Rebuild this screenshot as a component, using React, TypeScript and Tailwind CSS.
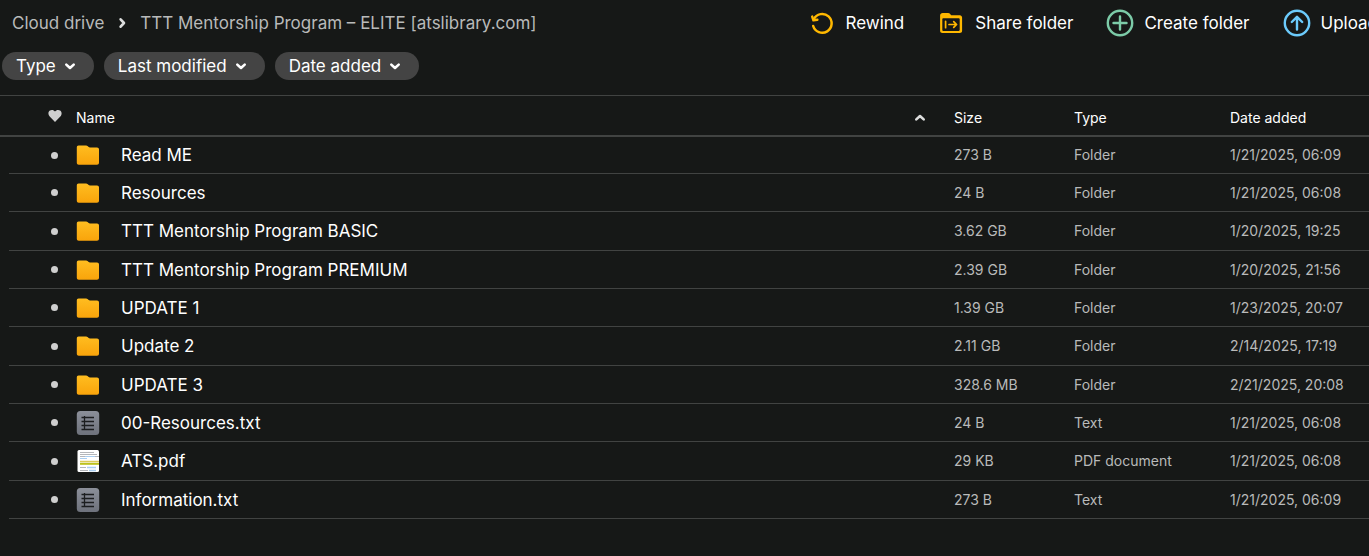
import type { ReactNode } from "react";
import { clsx } from "clsx";

type Kind = "folder" | "text" | "pdf";

const files: { name: string; size: string; type: string; date: string; kind: Kind }[] = [
  { name: "Read ME", size: "273 B", type: "Folder", date: "1/21/2025, 06:09", kind: "folder" },
  { name: "Resources", size: "24 B", type: "Folder", date: "1/21/2025, 06:08", kind: "folder" },
  { name: "TTT Mentorship Program BASIC", size: "3.62 GB", type: "Folder", date: "1/20/2025, 19:25", kind: "folder" },
  { name: "TTT Mentorship Program PREMIUM", size: "2.39 GB", type: "Folder", date: "1/20/2025, 21:56", kind: "folder" },
  { name: "UPDATE 1", size: "1.39 GB", type: "Folder", date: "1/23/2025, 20:07", kind: "folder" },
  { name: "Update 2", size: "2.11 GB", type: "Folder", date: "2/14/2025, 17:19", kind: "folder" },
  { name: "UPDATE 3", size: "328.6 MB", type: "Folder", date: "2/21/2025, 20:08", kind: "folder" },
  { name: "00-Resources.txt", size: "24 B", type: "Text", date: "1/21/2025, 06:08", kind: "text" },
  { name: "ATS.pdf", size: "29 KB", type: "PDF document", date: "1/21/2025, 06:08", kind: "pdf" },
  { name: "Information.txt", size: "273 B", type: "Text", date: "1/21/2025, 06:09", kind: "text" },
];

const filters = ["Type", "Last modified", "Date added"];

function Chevron({ className }: { className?: string }) {
  return (
    <svg
      viewBox="0 0 12 12"
      fill="none"
      stroke="currentColor"
      strokeWidth="2.6"
      strokeLinecap="round"
      strokeLinejoin="round"
      className={clsx("size-3 shrink-0", className)}
      aria-hidden="true"
    >
      <path d="M2.300 4.600 6 8l3.700-3.400" />
    </svg>
  );
}

function RewindIcon() {
  return (
    <svg viewBox="0 0 28 28" fill="none" stroke="#ffb800" strokeWidth="2.500" strokeLinecap="round" className="size-7">
      <path d="M5.800 10.200A9.400 9.400 0 1 1 5.200 17" />
      <path d="M4.200 7.600l1.200 3.700 4-.6" strokeWidth="2.400" strokeLinejoin="round" />
    </svg>
  );
}

function ShareIcon() {
  return (
    <svg viewBox="0 0 28 28" fill="none" stroke="#ffb800" className="size-7">
      <path
        fill="#ffb800"
        stroke="none"
        fillRule="evenodd"
        d="M5.600 4h5.600c.6 0 1.100.2 1.500.6l1.500 1.600h8.600c1.300 0 2.300 1 2.300 2.300v13.200c0 1.300-1 2.300-2.300 2.300H5.400c-1.300 0-2.300-1-2.300-2.300V6.500C3.100 5.100 4.200 4 5.600 4Zm.6 5.200c-.5 0-.9.4-.9.9v10.900c0 .5.4.9.9.9h15.600c.5 0 .9-.4.9-.9V10.100c0-.5-.4-.9-.9-.9Z"
      />
      <path d="M8.600 12.300v6.400M12 15.500h7M16.700 12.600l2.900 2.900-2.900 2.900" strokeWidth="1.700" strokeLinecap="round" strokeLinejoin="round" />
    </svg>
  );
}

function CreateIcon() {
  return (
    <svg viewBox="0 0 28 28" fill="none" stroke="#7ccba8" strokeWidth="2.400" strokeLinecap="round" className="size-7">
      <circle cx="14" cy="14" r="12.200" />
      <path d="M14 7.500v13M7.500 14h13" />
    </svg>
  );
}

function UploadIcon() {
  return (
    <svg viewBox="0 0 28 28" fill="none" stroke="#6ccbfc" strokeWidth="2.400" strokeLinecap="round" strokeLinejoin="round" className="size-7">
      <circle cx="14" cy="14" r="12.200" />
      <path d="M14 20.500V8M8.800 13 14 7.800l5.200 5.200" />
    </svg>
  );
}

function FolderIcon() {
  return (
    <svg viewBox="0 0 24 24" className="size-6" aria-hidden="true">
      <defs>
        <linearGradient id="folder" x1="0" y1="0" x2="0" y2="1">
          <stop offset="0" stopColor="#ffbd20" />
          <stop offset="1" stopColor="#f9a40b" />
        </linearGradient>
      </defs>
      <path
        fill="url(#folder)"
        d="M2.600 2.500h7.600c.5 0 .9.200 1.300.5l1.200 1.100c.3.300.8.400 1.200.4h7.100c1.200 0 2 .9 2 2v13.200c0 1.200-.8 2-2 2H2.800c-1.200 0-2-.8-2-2V4.500c0-1.200.6-2 1.800-2Z"
      />
    </svg>
  );
}

function TextIcon() {
  return (
    <svg viewBox="0 0 24 24" className="size-6" aria-hidden="true">
      <defs>
        <linearGradient id="text" x1="0" y1="0" x2="0" y2="1">
          <stop offset="0" stopColor="#8b8f99" />
          <stop offset="1" stopColor="#6e727c" />
        </linearGradient>
      </defs>
      <rect x="0.800" y="0" width="22.400" height="24" rx="3.500" fill="url(#text)" />
      <path d="M5.500 6.500h12.500M5.500 10.500h12.500M5.500 14.500h12.500M5.500 18.500h12.500M8.500 5v14" stroke="#1c1e20" strokeWidth="1.300" />
    </svg>
  );
}

function PdfIcon() {
  return (
    <svg viewBox="0 0 24 24" className="size-6" aria-hidden="true">
      <rect x="1.500" y="1" width="21.500" height="22" rx="1.500" fill="#fff" />
      <path d="M4 3.500h14M4 5.500h17M4 7.500h19" stroke="#b4b6ba" strokeWidth="1" />
      <path d="M9 7.500h10M4 9.500h7" stroke="#a9cdf0" strokeWidth="1" />
      <path d="M4 12.500h19" stroke="#dccb58" strokeWidth="1.500" />
      <path d="M4 14.800h19" stroke="#bdc21c" strokeWidth="2" />
      <path d="M4 18.500h6M4 21.500h8" stroke="#b4b6ba" strokeWidth="1" />
      <path d="M11 18.500h9M13 21.500h7" stroke="#a9cdf0" strokeWidth="1.500" />
    </svg>
  );
}

function KindIcon({ kind }: { kind: Kind }) {
  if (kind === "folder") return <FolderIcon />;
  if (kind === "text") return <TextIcon />;
  return <PdfIcon />;
}

function Action({ icon, label }: { icon: ReactNode; label: string }) {
  return (
    <button type="button" className="flex items-center gap-[10px] whitespace-nowrap text-white">
      {icon}
      {label}
    </button>
  );
}

export default function App() {
  return (
    <div className="min-h-screen overflow-hidden bg-[#161817] font-['Inter',sans-serif] text-[17px] leading-6 text-white">
      <header className="flex h-[45px] items-center justify-between">
        <nav aria-label="Breadcrumb" className="flex items-center gap-3 pl-3 whitespace-nowrap text-[#b9baba]">
          <a href="#drive">Cloud drive</a>
          <Chevron className="-rotate-90 text-[#dcdddd]" />
          <a href="#folder">TTT Mentorship Program – ELITE [atslibrary.com]</a>
        </nav>
        <div className="-mr-[9px] flex items-center gap-[33px]">
          <Action icon={<RewindIcon />} label="Rewind" />
          <Action icon={<ShareIcon />} label="Share folder" />
          <Action icon={<CreateIcon />} label="Create folder" />
          <Action icon={<UploadIcon />} label="Upload" />
        </div>
      </header>

      <div className="flex gap-[10px] pt-[7px] pb-[15px] pl-[2px]">
        {filters.map((label) => (
          <button
            key={label}
            type="button"
            className="flex h-7 items-center gap-2 rounded-full bg-[#444444] pr-[18px] pl-[14px] whitespace-nowrap"
          >
            {label}
            <Chevron />
          </button>
        ))}
      </div>

      <table className="w-full table-fixed border-separate border-spacing-0 border-t border-[#414342] text-left">
        <colgroup>
          <col className="w-[9px]" />
          <col className="w-[67px]" />
          <col />
          <col className="w-[120px]" />
          <col className="w-[156px]" />
          <col className="w-[139px]" />
        </colgroup>
        <thead className="text-sm">
          <tr className="h-[41px] *:border-b-2 *:border-[#414342] *:p-0 *:pt-1 *:font-normal">
            <th />
            <th>
              <button type="button" aria-label="Favourites" className="ml-[39px] block text-[#cfcfcf]">
                <svg viewBox="0 0 14 18" fill="currentColor" className="h-[18px] w-[14px]">
                  <path d="M7 13 1.700 7.600C-.2 5.600.1 2.700 1.900 1.500 3.700.4 5.900.9 7 2.600 8.100.9 10.300.4 12.100 1.500c1.800 1.200 2.100 4.100.2 6.100Z" />
                </svg>
              </button>
            </th>
            <th>
              <button type="button" className="flex w-full items-center justify-between pr-7">
                Name
                <Chevron className="rotate-180 text-[#dcdddd]" />
              </button>
            </th>
            <th>Size</th>
            <th>Type</th>
            <th>Date added</th>
          </tr>
        </thead>
        <tbody className="text-sm text-[#b9baba]">
          {files.map((file) => (
            <tr
              key={file.name}
              className="h-[38px] *:border-b *:border-[#414342] *:p-0 *:first:border-b-0 first:h-[37px] [&:nth-child(3n)]:h-[39px]"
            >
              <td />
              <td>
                <span className="ml-[42px] block size-[7px] rounded-full bg-[#cfcfcf]" />
              </td>
              <td>
                <a href="#open" className="flex items-center gap-[21px] text-[17px] leading-6 text-white">
                  <KindIcon kind={file.kind} />
                  {file.name}
                </a>
              </td>
              <td>{file.size}</td>
              <td>{file.type}</td>
              <td>{file.date}</td>
            </tr>
          ))}
        </tbody>
      </table>
    </div>
  );
}
